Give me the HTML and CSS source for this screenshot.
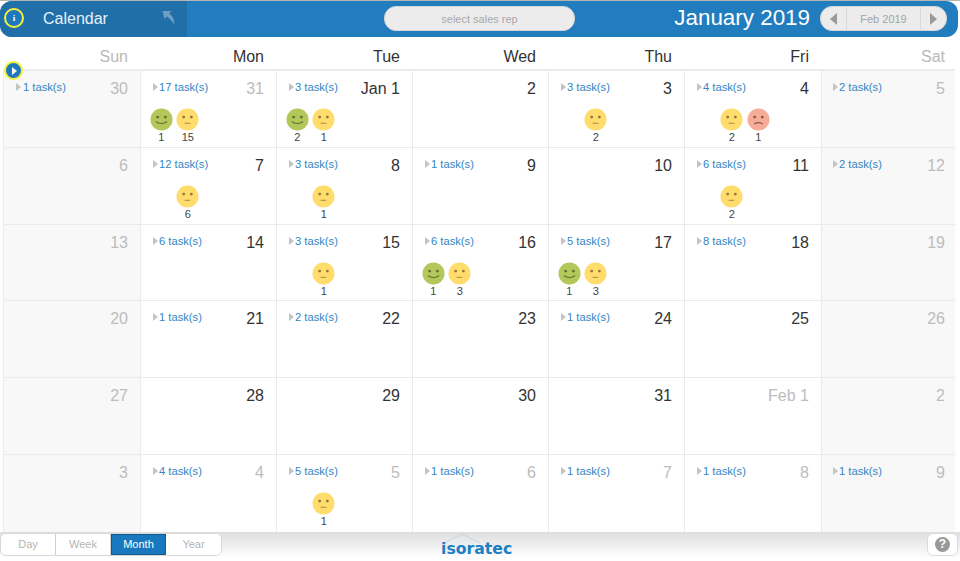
FILE: index.html
```html
<!DOCTYPE html>
<html lang="en">
<head>
<meta charset="utf-8">
<title>Calendar</title>
<link rel="stylesheet" href="styles.css">
</head>
<body>
<svg class="defs" width="0" height="0" aria-hidden="true">
  <defs>
    <symbol id="good" viewBox="0 0 24 24"><circle cx="12" cy="12" r="11.5" fill="#b4c75a"/><circle cx="8" cy="9.5" r="1.500" fill="#5f6e2b"/><circle cx="16" cy="9.5" r="1.500" fill="#5f6e2b"/><path d="M6.5 14.5q5.500 3.500 11 0" fill="none" stroke="#6d7d32" stroke-width="1.300" stroke-linecap="round"/></symbol>
    <symbol id="okay" viewBox="0 0 24 24"><circle cx="12" cy="12" r="11.500" fill="#ffdc6c"/><circle cx="8" cy="9.500" r="1.500" fill="#8f7a3a"/><circle cx="16" cy="9.500" r="1.500" fill="#8f7a3a"/><path d="M9.500 16h5" fill="none" stroke="#b99d4a" stroke-width="1.300" stroke-linecap="round"/></symbol>
    <symbol id="bad" viewBox="0 0 24 24"><circle cx="12" cy="12" r="11.500" fill="#f7ac98"/><circle cx="8" cy="9.500" r="1.500" fill="#87584c"/><circle cx="16" cy="9.500" r="1.500" fill="#87584c"/><path d="M8 16.500q4-2.500 8 0" fill="none" stroke="#87584c" stroke-width="1.300" stroke-linecap="round"/></symbol>
  </defs>
</svg>

<header class="topbar">
  <div class="topbar-left">
    <span class="title">Calendar</span>
    <svg class="back" width="14" height="16" viewBox="0 0 14 16"><path d="M0.500 1h9L7.200 3.600C10.500 6 12.500 9.500 12.500 15 10.500 11.500 8.500 9 5 6.500L2.500 9z" fill="#6f9dc4"/></svg>
  </div>
  <div class="topbar-mid"><button class="rep">select sales rep</button></div>
  <div class="topbar-right">
    <span class="month">January 2019</span>
    <div class="pager">
      <span class="pager-arrow"><svg width="9" height="14" viewBox="0 0 9 14"><path d="M8 1v12L1 7z" fill="#9a9a9a"/></svg></span>
      <span class="pager-label">Feb 2019</span>
      <span class="pager-arrow end"><svg width="9" height="14" viewBox="0 0 9 14"><path d="M1 1v12l7-6z" fill="#9a9a9a"/></svg></span>
    </div>
  </div>
</header>

<span class="marker marker-info">i</span>
<span class="marker marker-play"><svg width="6" height="8" viewBox="0 0 6 8"><path d="M1 0v8l5-4z" fill="#fff"/></svg></span>

<main class="calendar">
  <div class="weekdays">
    <div class="wd off">Sun</div><div class="wd">Mon</div><div class="wd">Tue</div><div class="wd">Wed</div><div class="wd">Thu</div><div class="wd">Fri</div><div class="wd off">Sat</div>
  </div>
  <div class="grid">
    <div class="cell weekend"><div class="cell-head"><a class="tasks">1 task(s)</a><span class="date dim">30</span></div></div>
    <div class="cell"><div class="cell-head"><a class="tasks">17 task(s)</a><span class="date dim">31</span></div>
      <div class="faces"><div class="slot"><svg class="face"><use href="#good"/></svg><span>1</span></div><div class="slot"><svg class="face"><use href="#okay"/></svg><span>15</span></div></div></div>
    <div class="cell"><div class="cell-head"><a class="tasks">3 task(s)</a><span class="date">Jan 1</span></div>
      <div class="faces"><div class="slot"><svg class="face"><use href="#good"/></svg><span>2</span></div><div class="slot"><svg class="face"><use href="#okay"/></svg><span>1</span></div></div></div>
    <div class="cell"><div class="cell-head"><span class="date">2</span></div></div>
    <div class="cell"><div class="cell-head"><a class="tasks">3 task(s)</a><span class="date">3</span></div>
      <div class="faces"><div class="slot"></div><div class="slot"><svg class="face"><use href="#okay"/></svg><span>2</span></div></div></div>
    <div class="cell"><div class="cell-head"><a class="tasks">4 task(s)</a><span class="date">4</span></div>
      <div class="faces"><div class="slot"></div><div class="slot"><svg class="face"><use href="#okay"/></svg><span>2</span></div><div class="slot"><svg class="face"><use href="#bad"/></svg><span>1</span></div></div></div>
    <div class="cell weekend"><div class="cell-head"><a class="tasks">2 task(s)</a><span class="date dim">5</span></div></div>

    <div class="cell weekend"><div class="cell-head"><span class="date dim">6</span></div></div>
    <div class="cell"><div class="cell-head"><a class="tasks">12 task(s)</a><span class="date">7</span></div>
      <div class="faces"><div class="slot"></div><div class="slot"><svg class="face"><use href="#okay"/></svg><span>6</span></div></div></div>
    <div class="cell"><div class="cell-head"><a class="tasks">3 task(s)</a><span class="date">8</span></div>
      <div class="faces"><div class="slot"></div><div class="slot"><svg class="face"><use href="#okay"/></svg><span>1</span></div></div></div>
    <div class="cell"><div class="cell-head"><a class="tasks">1 task(s)</a><span class="date">9</span></div></div>
    <div class="cell"><div class="cell-head"><span class="date">10</span></div></div>
    <div class="cell"><div class="cell-head"><a class="tasks">6 task(s)</a><span class="date">11</span></div>
      <div class="faces"><div class="slot"></div><div class="slot"><svg class="face"><use href="#okay"/></svg><span>2</span></div></div></div>
    <div class="cell weekend"><div class="cell-head"><a class="tasks">2 task(s)</a><span class="date dim">12</span></div></div>

    <div class="cell weekend"><div class="cell-head"><span class="date dim">13</span></div></div>
    <div class="cell"><div class="cell-head"><a class="tasks">6 task(s)</a><span class="date">14</span></div></div>
    <div class="cell"><div class="cell-head"><a class="tasks">3 task(s)</a><span class="date">15</span></div>
      <div class="faces"><div class="slot"></div><div class="slot"><svg class="face"><use href="#okay"/></svg><span>1</span></div></div></div>
    <div class="cell"><div class="cell-head"><a class="tasks">6 task(s)</a><span class="date">16</span></div>
      <div class="faces"><div class="slot"><svg class="face"><use href="#good"/></svg><span>1</span></div><div class="slot"><svg class="face"><use href="#okay"/></svg><span>3</span></div></div></div>
    <div class="cell"><div class="cell-head"><a class="tasks">5 task(s)</a><span class="date">17</span></div>
      <div class="faces"><div class="slot"><svg class="face"><use href="#good"/></svg><span>1</span></div><div class="slot"><svg class="face"><use href="#okay"/></svg><span>3</span></div></div></div>
    <div class="cell"><div class="cell-head"><a class="tasks">8 task(s)</a><span class="date">18</span></div></div>
    <div class="cell weekend"><div class="cell-head"><span class="date dim">19</span></div></div>

    <div class="cell weekend"><div class="cell-head"><span class="date dim">20</span></div></div>
    <div class="cell"><div class="cell-head"><a class="tasks">1 task(s)</a><span class="date">21</span></div></div>
    <div class="cell"><div class="cell-head"><a class="tasks">2 task(s)</a><span class="date">22</span></div></div>
    <div class="cell"><div class="cell-head"><span class="date">23</span></div></div>
    <div class="cell"><div class="cell-head"><a class="tasks">1 task(s)</a><span class="date">24</span></div></div>
    <div class="cell"><div class="cell-head"><span class="date">25</span></div></div>
    <div class="cell weekend"><div class="cell-head"><span class="date dim">26</span></div></div>

    <div class="cell weekend"><div class="cell-head"><span class="date dim">27</span></div></div>
    <div class="cell"><div class="cell-head"><span class="date">28</span></div></div>
    <div class="cell"><div class="cell-head"><span class="date">29</span></div></div>
    <div class="cell"><div class="cell-head"><span class="date">30</span></div></div>
    <div class="cell"><div class="cell-head"><span class="date">31</span></div></div>
    <div class="cell"><div class="cell-head"><span class="date dim">Feb 1</span></div></div>
    <div class="cell weekend"><div class="cell-head"><span class="date dim">2</span></div></div>

    <div class="cell weekend"><div class="cell-head"><span class="date dim">3</span></div></div>
    <div class="cell"><div class="cell-head"><a class="tasks">4 task(s)</a><span class="date dim">4</span></div></div>
    <div class="cell"><div class="cell-head"><a class="tasks">5 task(s)</a><span class="date dim">5</span></div>
      <div class="faces"><div class="slot"></div><div class="slot"><svg class="face"><use href="#okay"/></svg><span>1</span></div></div></div>
    <div class="cell"><div class="cell-head"><a class="tasks">1 task(s)</a><span class="date dim">6</span></div></div>
    <div class="cell"><div class="cell-head"><a class="tasks">1 task(s)</a><span class="date dim">7</span></div></div>
    <div class="cell"><div class="cell-head"><a class="tasks">1 task(s)</a><span class="date dim">8</span></div></div>
    <div class="cell weekend"><div class="cell-head"><a class="tasks">1 task(s)</a><span class="date dim">9</span></div></div>
  </div>
</main>

<footer class="footer">
  <div class="views">
    <button class="view">Day</button><button class="view">Week</button><button class="view active">Month</button><button class="view">Year</button>
  </div>
  <div class="logo">
    <svg class="roof" width="36" height="10" viewBox="0 0 36 10"><path d="M0 10 18 1l18 9" fill="none" stroke="#bfd6e6" stroke-width="1"/></svg>
    <span class="logo-text">isoratec</span>
  </div>
  <button class="help"><span class="help-mark">?</span></button>
</footer>
</body>
</html>
```

FILE: styles.css
```css
* { box-sizing: border-box; }
html, body { height: 100%; }
body {
  margin: 0;
  width: 960px;
  height: 561px;
  overflow: hidden;
  position: relative;
  display: flex;
  flex-direction: column;
  background: #fff;
  font-family: "Liberation Sans", Arial, sans-serif;
  border-top: 1px solid #b5b5b5;
}
.defs { position: absolute; }

.topbar {
  flex: none;
  height: 36px;
  width: 958px;
  display: flex;
  align-items: center;
  background: #227dbf;
  border-radius: 12px;
  overflow: hidden;
}
.topbar-left {
  width: 187px;
  height: 100%;
  flex: none;
  display: flex;
  align-items: center;
  justify-content: space-between;
  padding: 0 11px 1px 43px;
  background: #206fa9;
}
.title { color: #e8f1f8; font-size: 16px; line-height: 1; }
.back { margin-top: -1px; }
.topbar-mid { flex: none; width: 388px; display: flex; padding-left: 197px; margin-bottom: 1px; }
.rep {
  flex: none;
  width: 191px;
  height: 25px;
  border: 1px solid #d5d5d5;
  border-radius: 12px;
  background: #ececec;
  color: #a9a9a9;
  font: 11px "Liberation Sans", Arial, sans-serif;
  padding: 0;
}
.topbar-right {
  flex: 1;
  display: flex;
  align-items: center;
  justify-content: flex-end;
  padding-right: 11px;
  gap: 10px;
  margin-bottom: 1px;
}
.month { color: #fff; font-size: 22.4px; line-height: 1; white-space: nowrap; }
.pager {
  display: flex;
  align-items: stretch;
  width: 127px;
  height: 25px;
  background: #ececec;
  border: 1px solid #d5d5d5;
  border-radius: 12px;
  overflow: hidden;
}
.pager-arrow {
  width: 26px;
  flex: none;
  display: flex;
  align-items: center;
  justify-content: center;
  border-right: 1px solid #d9d9d9;
}
.pager-arrow.end { border-right: 0; border-left: 1px solid #d9d9d9; }
.pager-label {
  flex: 1;
  display: flex;
  align-items: center;
  justify-content: center;
  color: #a3a3a3;
  font-size: 11px;
}

.marker {
  position: absolute;
  display: flex;
  align-items: center;
  justify-content: center;
  border-radius: 50%;
  background: #1d79bd;
  border: 2px solid #f6ef3c;
  color: #fff;
  z-index: 2;
}
.marker-info {
  left: 4px;
  top: 7px;
  width: 20px;
  height: 20px;
  font: bold 9px "Liberation Serif", serif;
}
.marker-play { left: 4px; top: 60px; width: 19px; height: 19px; }

.calendar { flex: none; margin-left: 3px; width: 952px; }
.weekdays {
  display: grid;
  grid-template-columns: 137px 136px 136px 136px 136px 137px 134px;
  height: 34px;
  border-bottom: 2px solid #ebebeb;
}
.wd {
  text-align: right;
  padding: 11px 12px 0 0;
  font-size: 16px;
  line-height: 18px;
  color: #333;
}
.wd:nth-child(7) { padding-right: 10px; }
.wd.off { color: #b9b9b9; }

.grid {
  display: grid;
  grid-template-columns: 137px 136px 136px 136px 136px 137px 134px;
  grid-auto-rows: 76.8px;
}
.cell {
  padding: 8px 0 0 0;
  border-left: 1px solid #ebebeb;
  border-bottom: 1px solid #ebebeb;
  min-width: 0;
}
.cell:nth-last-child(-n+7) { border-bottom: 0; }
.weekend { background: #f8f8f8; }
.cell-head {
  display: flex;
  justify-content: space-between;
  align-items: flex-start;
  height: 20px;
  padding: 0 12px;
}
.cell:nth-child(7n) .cell-head { padding: 0 10px 0 11px; }
.tasks {
  position: relative;
  padding-left: 6px;
  font-size: 11.2px;
  line-height: 16px;
  color: #3286c3;
  white-space: nowrap;
}
.cell:nth-child(7n+1) .tasks { padding-left: 7px; }
.tasks::before {
  content: "";
  position: absolute;
  left: 0;
  top: 4px;
  border-left: 5px solid #c4c4c4;
  border-top: 4px solid transparent;
  border-bottom: 4px solid transparent;
}
.date {
  margin-left: auto;
  padding-top: 1px;
  font-size: 16px;
  line-height: 18px;
  color: #333;
  white-space: nowrap;
}
.date.dim { color: #bcbcbc; }
.faces {
  display: flex;
  padding: 9px 0 0 7px;
}
.slot {
  width: 26.5px;
  flex: none;
  display: flex;
  flex-direction: column;
  align-items: center;
  font-size: 11px;
  line-height: 12px;
  color: #444;
}
.face { width: 23px; height: 23px; display: block; filter: blur(0.3px); }

.footer {
  flex: 1;
  display: flex;
  align-items: flex-start;
  justify-content: space-between;
  position: relative;
  padding: 1px 2px 0 0;
  background: linear-gradient(#dedede, #fff 90%);
}
.views {
  display: flex;
  background: #fff;
  border: 1px solid #d8d8d8;
  border-radius: 6px;
  height: 23px;
  overflow: hidden;
}
.view {
  width: 55px;
  padding: 0;
  border: 0;
  border-right: 1px solid #cfcfcf;
  background: #fff;
  color: #b5b5b5;
  font: 11px "Liberation Sans", Arial, sans-serif;
}
.view:last-child { border-right: 0; }
.view.active {
  background: #1878bd;
  color: #fff;
  border: 1px solid #15598f;
}
.logo {
  position: absolute;
  left: 441px;
  top: 1px;
  width: 72px;
}
.roof { display: block; margin: 0 0 -2px 3px; }
.logo-text {
  display: block;
  font: bold 15.7px/16px "DejaVu Sans", sans-serif;
  color: #1b7fc4;
  white-space: nowrap;
}
.help {
  width: 31px;
  height: 23px;
  padding: 0;
  background: #fff;
  border: 1px solid #dcdcdc;
  border-radius: 6px;
  display: flex;
  align-items: center;
  justify-content: center;
}
.help-mark {
  width: 15px;
  height: 15px;
  border-radius: 50%;
  background: #999;
  color: #fff;
  font: bold 12px/15px "Liberation Sans", Arial, sans-serif;
  text-align: center;
}
```
